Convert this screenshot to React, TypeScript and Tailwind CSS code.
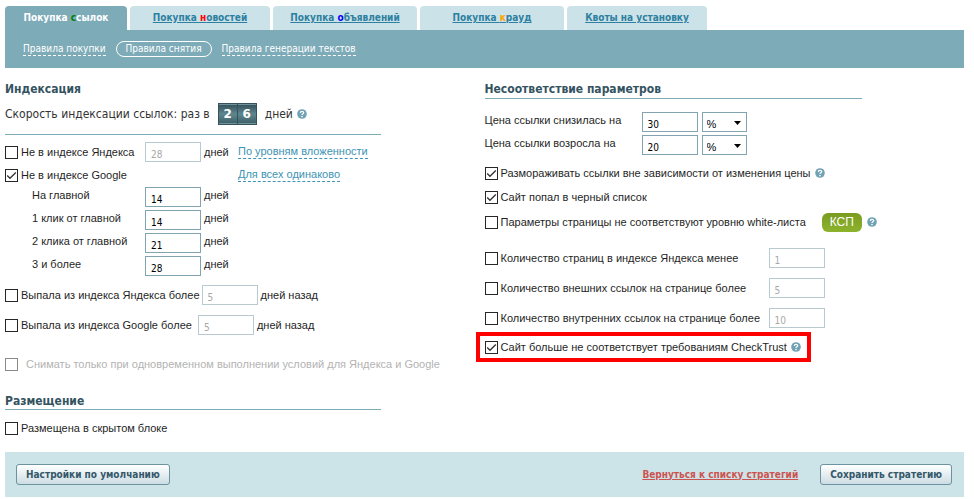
import type { ReactNode } from "react";

const tabs = [
  { before: "Покупка ", mark: "н", after: "овостей", color: "text-[#ff0000]", width: "w-[140px]" },
  { before: "Покупка ", mark: "о", after: "бъявлений", color: "text-[#0000ff]", width: "w-[144px]" },
  { before: "Покупка ", mark: "к", after: "рауд", color: "text-[#ffa500]", width: "w-[144px]" },
  { before: "Квоты на установку", mark: "", after: "", color: "", width: "w-[140px]" },
];

const googleLevels = [
  { id: "level-0", label: "На главной", value: "14" },
  { id: "level-1", label: "1 клик от главной", value: "14" },
  { id: "level-2", label: "2 клика от главной", value: "21" },
  { id: "level-3", label: "3 и более", value: "28" },
];

const prices = [
  { id: "price-down", label: "Цена ссылки снизилась на", value: "30" },
  { id: "price-up", label: "Цена ссылки возросла на", value: "20" },
];

const counts = [
  { id: "pages", label: "Количество страниц в индексе Яндекса менее", value: "1" },
  { id: "external", label: "Количество внешних ссылок на странице более", value: "5" },
  { id: "internal", label: "Количество внутренних ссылок на странице более", value: "10" },
];

type CheckProps = {
  children: ReactNode;
  checked?: boolean;
  disabled?: boolean;
  className?: string;
};

function Check({ children, checked, disabled, className = "gap-[3px]" }: CheckProps) {
  return (
    <label className={`flex items-center whitespace-nowrap ${disabled ? "text-[#b3b3b3]" : ""} ${className}`}>
      <span className="relative size-[13px] shrink-0">
        <input
          type="checkbox"
          defaultChecked={checked}
          disabled={disabled}
          className="peer block size-[13px] appearance-none border border-[#262626] bg-white disabled:border-[#8a8a8a]"
        />
        <svg
          aria-hidden="true"
          viewBox="0 0 13 13"
          className="pointer-events-none absolute inset-0 hidden size-[13px] fill-none stroke-[#333] stroke-[1.3] peer-checked:block"
        >
          <path d="M2.2 6.5 5 9.3 10.8 3.5" />
        </svg>
      </span>
      <span>{children}</span>
    </label>
  );
}

function Field({ id, label, value, disabled }: { id?: string; label?: string; value: string; disabled?: boolean }) {
  return (
    <input
      id={id}
      aria-label={label}
      type="text"
      defaultValue={value}
      disabled={disabled}
      className="h-5 w-14 shrink-0 border border-[#82a3b0] bg-white px-[5px] pt-1 font-['DejaVu_Sans_Condensed','DejaVu_Sans',sans-serif] text-[10px] text-black disabled:border-[#b9c9d0] disabled:text-[#a8a8a8]"
    />
  );
}

function Help() {
  return (
    <svg role="img" aria-label="Справка" viewBox="0 0 10 10" className="size-[10px] shrink-0">
      <circle cx="5" cy="5" r="4.8" fill="#70a2b4" />
      <path d="M3.3 3.9C3.3 2 6.7 2 6.7 3.8 6.7 4.9 5 4.8 5 6" fill="none" stroke="#fff" strokeWidth="1.2" />
      <circle cx="5" cy="7.6" r="0.8" fill="#fff" />
    </svg>
  );
}

function DashedLink({ children }: { children: ReactNode }) {
  return (
    <a href="#" className="border-b border-dashed border-[#3d93b3] leading-[13px] whitespace-nowrap text-[#3d93b3]">
      {children}
    </a>
  );
}

function Heading({ children }: { children: ReactNode }) {
  return (
    <h2 className="font-['DejaVu_Sans_Condensed','DejaVu_Sans',sans-serif] text-[12px] leading-4 font-bold text-[#34535f]">
      {children}
    </h2>
  );
}

function Digit({ children }: { children: ReactNode }) {
  return (
    <span className="flex h-5 w-[18px] items-center justify-center border-y border-[#6f9199] bg-linear-to-b from-[#36535c] via-[#5f8790] to-[#3f616a] font-['DejaVu_Sans',sans-serif] text-[12px] font-bold text-white">
      {children}
    </span>
  );
}

function Button({ children }: { children: ReactNode }) {
  return (
    <button
      type="button"
      className="h-[21px] rounded-[3px] border border-[#6c93a1] bg-linear-to-b from-white to-[#cddde3] px-[9px] text-[10px] leading-4 font-bold whitespace-nowrap text-[#34586a]"
    >
      {children}
    </button>
  );
}

export default function App() {
  return (
    <div className="bg-white pt-1.5 pr-2.5 pb-0.5 pl-[5px] font-['DejaVu_Sans_Condensed','DejaVu_Sans',sans-serif] text-[11px] leading-4 text-[#1f1f1f]">
      <header className="text-[10px]">
        <nav className="flex gap-[3px] leading-6 font-bold">
          <a href="#" aria-current="page" className="w-[122px] rounded-t bg-[#7eabb8] text-center text-white">
            Покупка <span className="text-[#008000]">с</span>сылок
          </a>
          {tabs.map((tab) => (
            <a
              key={tab.before + tab.mark}
              href="#"
              className={`${tab.width} rounded-t bg-[#cce2e9] text-center text-[#2d80a0] underline`}
            >
              {tab.before}
              <span className={tab.color}>{tab.mark}</span>
              {tab.after}
            </a>
          ))}
        </nav>
        <nav className="flex h-[38px] items-center gap-[10px] bg-[#7eabb8] pl-[18px] text-white">
          <a href="#" className="border-b border-dashed border-white leading-3">
            Правила покупки
          </a>
          <a href="#" aria-current="page" className="rounded-full border border-white px-[9px] leading-[14px]">
            Правила снятия
          </a>
          <a href="#" className="border-b border-dashed border-white leading-3">
            Правила генерации текстов
          </a>
        </nav>
      </header>

      <main className="grid grid-cols-2 pt-[13px] font-['Liberation_Sans',sans-serif]">
        <div>
          <section>
            <Heading>Индексация</Heading>
            <div className="mt-1.5 flex w-full max-w-[376px] items-center border-b border-[#7eabb8] pb-[9px] font-['DejaVu_Sans_Condensed','DejaVu_Sans',sans-serif] text-[12px] text-[#333]">
              Скорость индексации ссылок: раз в
              <span className="mx-2 flex gap-px border border-[#35525b] bg-[#35525b]">
                <Digit>2</Digit>
                <Digit>6</Digit>
              </span>
              <span className="mr-1">дней</span>
              <Help />
            </div>

            <div className="mt-[7px] flex h-5 items-center">
              <Check className="w-[140px] gap-[3px]">Не в индексе Яндекса</Check>
              <Field label="Не в индексе Яндекса, дней" value="28" disabled />
              <span className="ml-[3px] w-[34px]">дней</span>
              <DashedLink>По уровням вложенности</DashedLink>
            </div>
            <div className="mt-[3px] flex h-5 items-center">
              <Check checked className="w-[233px] gap-[3px]">Не в индексе Google</Check>
              <DashedLink>Для всех одинаково</DashedLink>
            </div>

            <div className="mt-0.5 flex flex-col gap-[3px]">
              {googleLevels.map((level) => (
                <div key={level.id} className="flex">
                  <label htmlFor={level.id} className="w-[140px] pl-[27px]">
                    {level.label}
                  </label>
                  <Field id={level.id} value={level.value} />
                  <span className="ml-[3px]">дней</span>
                </div>
              ))}
            </div>

            <div className="mt-[9px] flex items-center">
              <Check className="mr-0.5 gap-[3px]">Выпала из индекса Яндекса более</Check>
              <Field label="Выпала из индекса Яндекса, дней назад" value="5" disabled />
              <span className="ml-[3px]">дней назад</span>
            </div>
            <div className="mt-2.5 flex items-center">
              <Check className="mr-1.5 gap-[3px]">Выпала из индекса Google более</Check>
              <Field label="Выпала из индекса Google, дней назад" value="5" disabled />
              <span className="ml-[3px]">дней назад</span>
            </div>
            <Check disabled className="mt-[19px] h-5 gap-2">
              Снимать только при одновременном выполнении условий для Яндекса и Google
            </Check>
          </section>

          <section className="mt-[19px]">
            <div className="max-w-[376px] border-b border-[#7eabb8]">
              <Heading>Размещение</Heading>
            </div>
            <Check className="mt-2 h-5 gap-[3px]">Размещена в скрытом блоке</Check>
          </section>
        </div>

        <section>
          <div className="max-w-[377px] border-b border-[#7eabb8] pb-px">
            <Heading>Несоответствие параметров</Heading>
          </div>

          <div className="mt-[13px] flex flex-col gap-[3px]">
            {prices.map((price) => (
              <div key={price.id} className="flex">
                <label htmlFor={price.id} className="w-[157px]">
                  {price.label}
                </label>
                <Field id={price.id} value={price.value} />
                <span className="relative ml-1">
                  <select
                    aria-label={`${price.label}, единица`}
                    className="block h-5 w-[45px] appearance-none border border-[#82a3b0] bg-white px-1 pt-[3px] text-[11px] leading-[14px] text-black"
                  >
                    <option>%</option>
                  </select>
                  <svg
                    aria-hidden="true"
                    viewBox="0 0 7 4"
                    className="pointer-events-none absolute top-[9px] right-1.5 h-1 w-[7px]"
                  >
                    <path d="M0 0h7L3.5 4z" />
                  </svg>
                </span>
              </div>
            ))}
          </div>

          <div className="mt-2 flex h-5 items-center gap-1">
            <Check checked>Размораживать ссылки вне зависимости от изменения цены</Check>
            <Help />
          </div>
          <Check checked className="mt-1 h-5 gap-[3px]">Сайт попал в черный список</Check>
          <div className="mt-[5px] flex h-5 items-center">
            <Check>Параметры страницы не соответствуют уровню white-листа</Check>
            <button
              type="button"
              className="mr-[5px] ml-4 h-[19px] rounded-md bg-linear-to-b from-[#7a9c22] to-[#8db32c] px-2 text-[12px] text-white"
            >
              КСП
            </button>
            <Help />
          </div>

          <div className="mt-4 flex flex-col gap-2.5">
            {counts.map((count) => (
              <div key={count.id} className="flex items-center">
                <Check className="w-[284px] gap-[3px]">{count.label}</Check>
                <Field label={count.label} value={count.value} disabled />
              </div>
            ))}
          </div>

          <div className="mt-1 -ml-[9px] flex h-[30px] w-fit items-center gap-1 border-4 border-[#ff0000] pr-1.5 pl-[5px]">
            <Check checked>Сайт больше не соответствует требованиям CheckTrust</Check>
            <Help />
          </div>
        </section>
      </main>

      <footer className="mt-3.5 flex h-[45px] items-center bg-[#cce3e7] pr-3 pl-[11px]">
        <Button>Настройки по умолчанию</Button>
        <a href="#" className="mr-[22px] ml-auto text-[10px] font-bold text-[#cc5450] underline">
          Вернуться к списку стратегий
        </a>
        <Button>Сохранить стратегию</Button>
      </footer>
    </div>
  );
}
